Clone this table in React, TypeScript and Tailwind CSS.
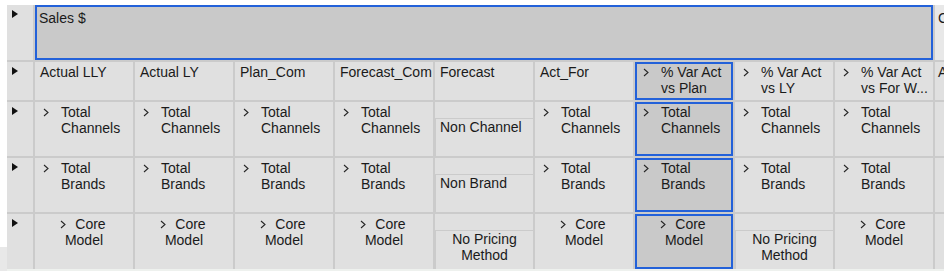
import React from "react";

type Cell =
  | { kind: "tree"; text: string }
  | { kind: "centered"; text: string[] }
  | { kind: "leaf"; text: string; centered?: boolean };

const HEADERS: Cell[] = [
  { kind: "leaf", text: "Actual LLY" },
  { kind: "leaf", text: "Actual LY" },
  { kind: "leaf", text: "Plan_Com" },
  { kind: "leaf", text: "Forecast_Com" },
  { kind: "leaf", text: "Forecast" },
  { kind: "leaf", text: "Act_For" },
  { kind: "tree", text: "% Var Act vs Plan" },
  { kind: "tree", text: "% Var Act vs LY" },
  { kind: "tree", text: "% Var Act vs For W..." },
];

const channels: Cell = { kind: "tree", text: "Total Channels" };
const brands: Cell = { kind: "tree", text: "Total Brands" };
const core: Cell = { kind: "centered", text: ["Core", "Model"] };

const BODY: Cell[][] = [
  [channels, channels, channels, channels, { kind: "leaf", text: "Non Channel" }, channels, channels, channels, channels],
  [brands, brands, brands, brands, { kind: "leaf", text: "Non Brand" }, brands, brands, brands, brands],
  [
    core,
    core,
    core,
    core,
    { kind: "leaf", text: "No Pricing Method", centered: true },
    core,
    core,
    { kind: "leaf", text: "No Pricing Method", centered: true },
    core,
  ],
];

const SELECTED_COL = 6;

function Chevron() {
  return (
    <svg width="8" height="10" viewBox="0 0 8 10" className="shrink-0">
      <polyline points="2,2 6,5.5 2,9" fill="none" stroke="#262626" strokeWidth="1.1" />
    </svg>
  );
}

function RowMarker() {
  return (
    <div className="bg-[#e0e0e0] pl-[5px] pt-[5px]">
      <svg width="6" height="8" viewBox="0 0 6 8">
        <polygon points="0,0 6,4 0,8" fill="#111" />
      </svg>
    </div>
  );
}

function CellBody({ cell, header }: { cell: Cell; header?: boolean }) {
  if (cell.kind === "tree") {
    return (
      <div className="flex pl-[7px] pr-1 pt-[2px]">
        <div className="flex h-4 w-[19px] items-center">
          <Chevron />
        </div>
        <div className="min-w-0 flex-1">{cell.text}</div>
      </div>
    );
  }
  if (cell.kind === "centered") {
    return (
      <div className="pt-[2px] text-center">
        <span className="inline-flex items-center gap-[8px] pr-[3px]">
          <Chevron />
          {cell.text[0]}
        </span>
        <div>{cell.text[1]}</div>
      </div>
    );
  }
  if (header) {
    return <div className="px-[5px] pt-[2px] whitespace-nowrap">{cell.text}</div>;
  }
  // leaf member: an empty band above, then the member in its own box
  return (
    <div className="flex h-full flex-col">
      <div className="h-[16px] shrink-0" />
      <div
        className={
          "flex-1 border-t border-l border-[#cbcbcb] " +
          (cell.centered ? "px-1 text-center" : "pl-[4px]")
        }
      >
        {cell.text}
      </div>
    </div>
  );
}

function DataCell({ cell, col, header }: { cell: Cell; col: number; header?: boolean }) {
  const selected = col === SELECTED_COL;
  return (
    <div
      className={
        "overflow-hidden " +
        (selected ? "bg-[#c9c9c9] shadow-[inset_0_0_0_2px_#2361d9]" : "bg-[#e0e0e0]")
      }
    >
      <CellBody cell={cell} header={header} />
    </div>
  );
}

export default function App() {
  return (
    <div
      className="flex h-[271px] w-[944px] overflow-hidden bg-white text-[14px] leading-[16px] text-[#1a1a1a]"
      style={{ fontFamily: '"Liberation Sans", Arial, sans-serif' }}
    >
      <div className="flex w-[7px] shrink-0 flex-col">
        <div className="h-[247px] bg-white" />
        <div className="flex-1 bg-[#e8e8e8]" />
      </div>

      <div className="flex min-w-0 flex-1 flex-col pt-[5px]">
        <div className="grid grid-cols-[26px_repeat(9,98px)_1fr] grid-rows-[55px_38px_54px_54px_55px] gap-[2px] bg-[#cbcbcb]">
          {/* measure row */}
          <RowMarker />
          <div className="col-span-9 bg-[#c9c9c9] pl-[4px] pt-[5px] shadow-[inset_0_0_0_2px_#2361d9]">
            Sales $
          </div>
          <div className="bg-[#e8e8e8] pl-[3px] pt-[5px]">Cost</div>

          {/* version row */}
          <RowMarker />
          {HEADERS.map((h, i) => (
            <DataCell key={i} cell={h} col={i} header />
          ))}
          <div className="bg-[#e0e0e0] pl-[3px] pt-[2px]">Act</div>

          {BODY.map((row, r) => (
            <React.Fragment key={r}>
              <RowMarker />
              {row.map((c, i) => (
                <DataCell key={i} cell={c} col={i} />
              ))}
              <div className="bg-[#e0e0e0]" />
            </React.Fragment>
          ))}
        </div>
        <div className="flex-1 bg-[#eef1ee]" />
      </div>
    </div>
  );
}
